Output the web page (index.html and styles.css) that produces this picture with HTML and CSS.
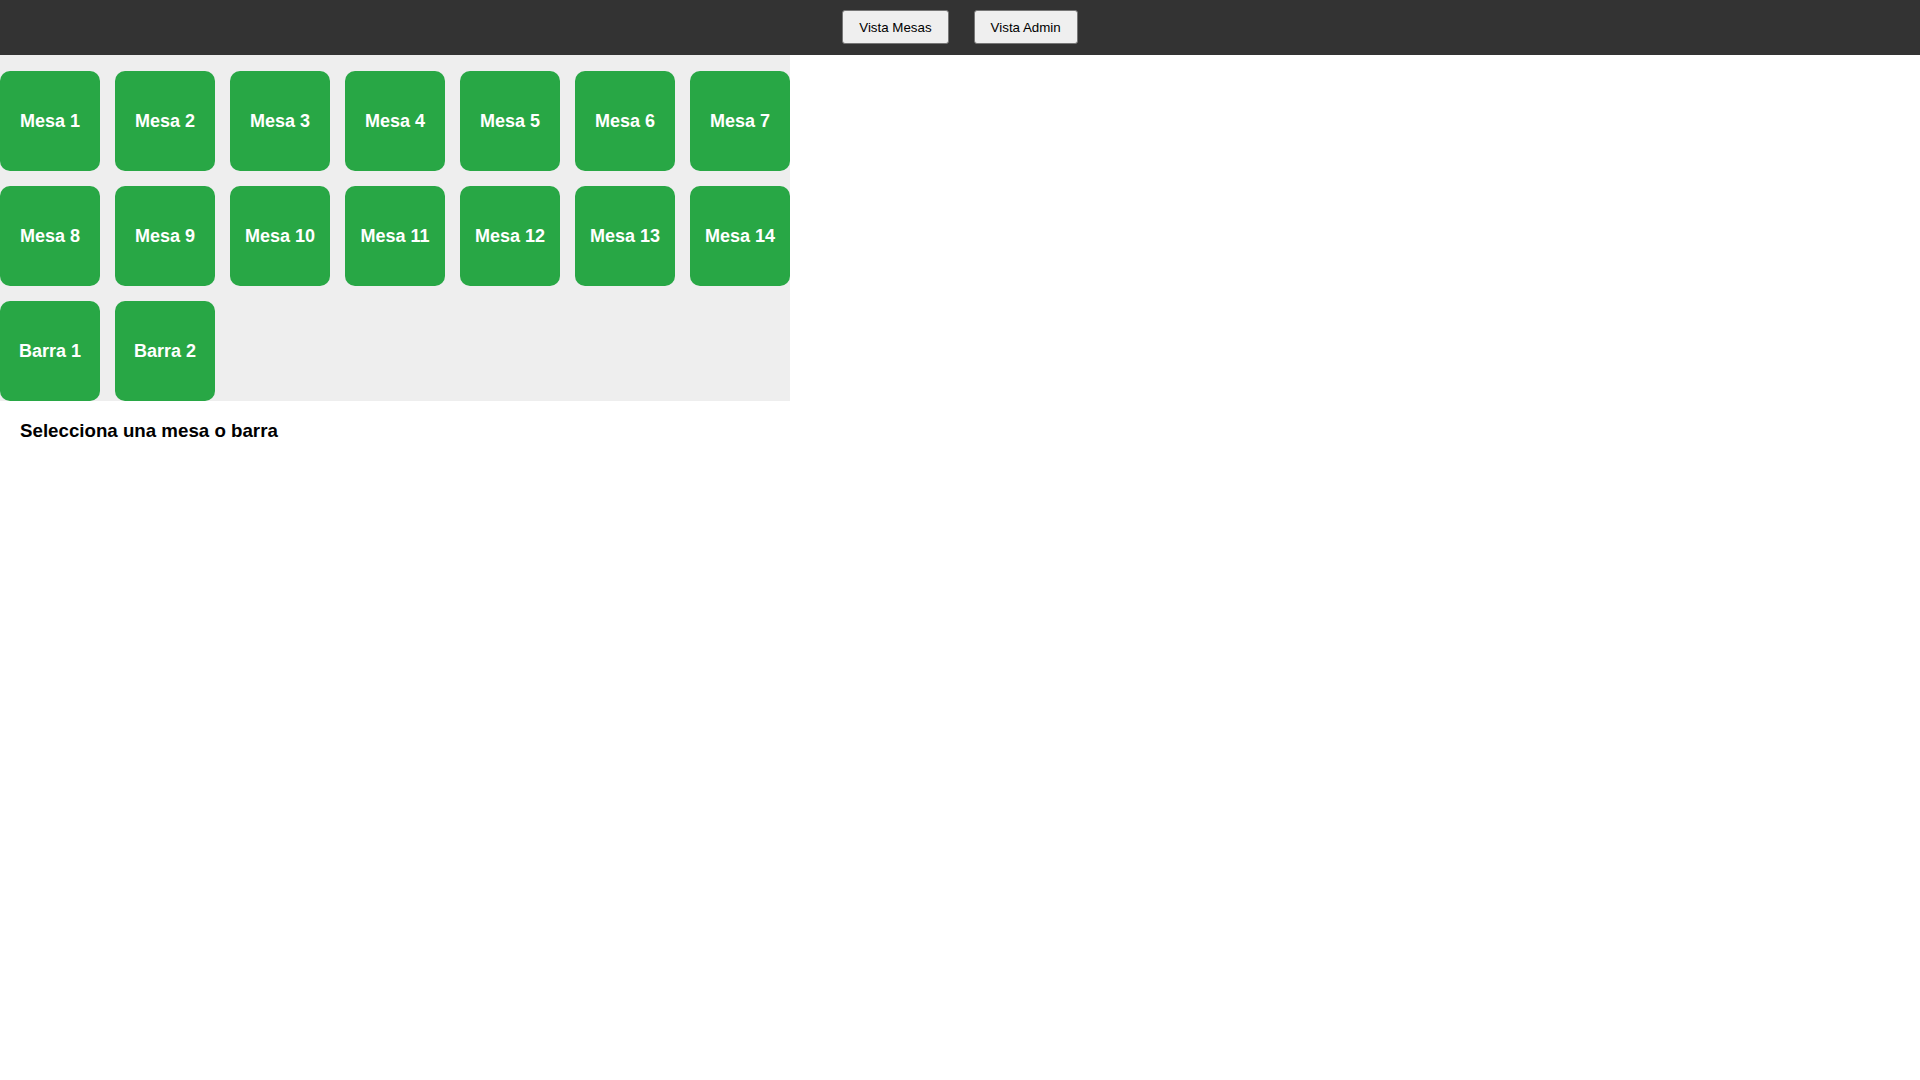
FILE: index.html
```html
<!DOCTYPE html>
<html lang="es">
<head>
<meta charset="utf-8">
<title>Mesas</title>
<link rel="stylesheet" href="styles.css">
</head>
<body>
<header class="topbar">
  <button class="nav-btn">Vista Mesas</button>
  <button class="nav-btn">Vista Admin</button>
</header>
<main>
  <section class="tables">
    <div class="tile">Mesa 1</div>
    <div class="tile">Mesa 2</div>
    <div class="tile">Mesa 3</div>
    <div class="tile">Mesa 4</div>
    <div class="tile">Mesa 5</div>
    <div class="tile">Mesa 6</div>
    <div class="tile">Mesa 7</div>
    <div class="tile">Mesa 8</div>
    <div class="tile">Mesa 9</div>
    <div class="tile">Mesa 10</div>
    <div class="tile">Mesa 11</div>
    <div class="tile">Mesa 12</div>
    <div class="tile">Mesa 13</div>
    <div class="tile">Mesa 14</div>
    <div class="tile">Barra 1</div>
    <div class="tile">Barra 2</div>
  </section>
  <section class="detail">
    <h3 class="detail-title">Selecciona una mesa o barra</h3>
  </section>
</main>
</body>
</html>
```
FILE: styles.css
```css
html, body {
  margin: 0;
  padding: 0;
  background: #ffffff;
  font-family: "Liberation Sans", Arial, sans-serif;
}

.topbar {
  height: 55px;
  background: #333333;
  display: flex;
  justify-content: center;
  align-items: flex-start;
  gap: 25px;
  padding-top: 10px;
  box-sizing: border-box;
}

.nav-btn {
  font-family: "Liberation Sans", Arial, sans-serif;
  font-size: 13.333px;
  color: #000000;
  background: #efefef;
  border: 1px solid #767676;
  border-radius: 3px;
  padding: 8px 16px;
  height: 34px;
  margin: 0;
}

.tables {
  width: 790px;
  background: #eeeeee;
  padding-top: 16px;
  display: grid;
  grid-template-columns: repeat(7, 100px);
  grid-auto-rows: 100px;
  gap: 15px;
}

.tile {
  background: #28a745;
  color: #ffffff;
  border-radius: 10px;
  display: flex;
  align-items: center;
  justify-content: center;
  font-size: 18px;
  font-weight: bold;
}

.detail {
  padding: 0 20px;
}

.detail-title {
  font-size: 18.72px;
  font-weight: bold;
  margin: 18.72px 0;
  color: #000000;
}
```
